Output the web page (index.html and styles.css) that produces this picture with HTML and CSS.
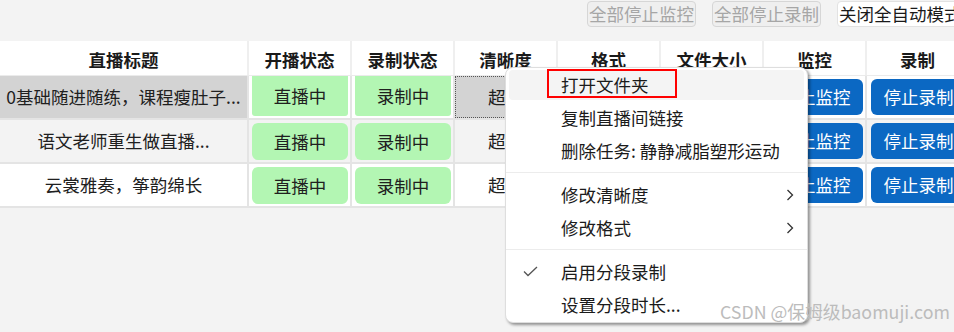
FILE: index.html
```html
<!DOCTYPE html>
<html lang="zh-CN">
<head>
  <meta charset="UTF-8">
  <title>直播录制任务</title>
  <link rel="stylesheet" href="styles.css">
</head>
<body>
  <div class="toolbar">
    <button class="tool-btn" disabled>全部停止监控</button>
    <button class="tool-btn" disabled>全部停止录制</button>
    <button class="tool-btn tool-btn-on">关闭全自动模式</button>
  </div>

  <div class="task-table">
    <div class="row row-head">
      <div class="cell">直播标题</div>
      <div class="cell">开播状态</div>
      <div class="cell">录制状态</div>
      <div class="cell">清晰度</div>
      <div class="cell">格式</div>
      <div class="cell">文件大小</div>
      <div class="cell">监控</div>
      <div class="cell">录制</div>
    </div>

    <div class="row row-current">
      <div class="cell cell-selected">0基础随进随练，课程瘦肚子...</div>
      <div class="cell"><span class="chip">直播中</span></div>
      <div class="cell"><span class="chip">录制中</span></div>
      <div class="cell cell-focus">超清</div>
      <div class="cell">FLV</div>
      <div class="cell">1.2 GB</div>
      <div class="cell"><button class="act-btn">停止监控</button></div>
      <div class="cell"><button class="act-btn">停止录制</button></div>
    </div>

    <div class="row row-alt">
      <div class="cell">语文老师重生做直播...</div>
      <div class="cell"><span class="chip">直播中</span></div>
      <div class="cell"><span class="chip">录制中</span></div>
      <div class="cell">超清</div>
      <div class="cell">FLV</div>
      <div class="cell">860 MB</div>
      <div class="cell"><button class="act-btn">停止监控</button></div>
      <div class="cell"><button class="act-btn">停止录制</button></div>
    </div>

    <div class="row">
      <div class="cell">云裳雅奏，筝韵绵长</div>
      <div class="cell"><span class="chip">直播中</span></div>
      <div class="cell"><span class="chip">录制中</span></div>
      <div class="cell">超清</div>
      <div class="cell">FLV</div>
      <div class="cell">415 MB</div>
      <div class="cell"><button class="act-btn">停止监控</button></div>
      <div class="cell"><button class="act-btn">停止录制</button></div>
    </div>
  </div>

  <!-- 右键菜单 -->
  <div class="context-menu">
    <div class="menu-item menu-item-hover">
      <span class="mi-icon"></span>打开文件夹
      <span class="mark-box"></span>
    </div>
    <div class="menu-item"><span class="mi-icon"></span>复制直播间链接</div>
    <div class="menu-item"><span class="mi-icon"></span>删除任务: 静静减脂塑形运动</div>
    <div class="menu-sep"></div>
    <div class="menu-item">
      <span class="mi-icon"></span>修改清晰度
      <svg class="mi-arrow" width="8" height="12" viewBox="0 0 8 12"><polyline points="1.5,1 6.5,6 1.5,11" fill="none" stroke="#333" stroke-width="1.3"/></svg>
    </div>
    <div class="menu-item">
      <span class="mi-icon"></span>修改格式
      <svg class="mi-arrow" width="8" height="12" viewBox="0 0 8 12"><polyline points="1.5,1 6.5,6 1.5,11" fill="none" stroke="#333" stroke-width="1.3"/></svg>
    </div>
    <div class="menu-sep"></div>
    <div class="menu-item">
      <span class="mi-icon"><svg width="15" height="11" viewBox="0 0 15 11"><polyline points="1,5.5 5,9.5 14,1" fill="none" stroke="#555" stroke-width="1.3"/></svg></span>启用分段录制
    </div>
    <div class="menu-item"><span class="mi-icon"></span>设置分段时长...</div>
  </div>

  <div class="watermark">CSDN @保姆级baomuji.com</div>
</body>
</html>
```

FILE: styles.css
```css
/* 基本样式 */
body {
  margin: 0;
  height: 332px;
  overflow: hidden;
  position: relative;
  background: #f3f3f3;
  font-family: "Noto Sans CJK SC", "Liberation Sans", sans-serif;
  font-size: 17.5px;
  color: #202020;
}

/* 顶部工具栏 */
.toolbar {
  height: 41px;
  box-sizing: border-box;
  padding: 1px 0 0 587px;
  display: flex;
  align-items: flex-start;
  gap: 16px;
  white-space: nowrap;
}

.tool-btn {
  height: 26px;
  padding: 0 1px;
  font: inherit;
  line-height: 24px;
  color: #a6a6a6;
  background: #efefef;
  border: 1px solid #d6d6d6;
  border-radius: 4px;
  flex-shrink: 0;
}

.tool-btn-on {
  color: #1a1a1a;
  background: #fff;
  border-color: #e2e2e2;
}

/* 任务表格 */
.task-table {
  width: 970px;
}

.row {
  display: grid;
  grid-template-columns: 249px repeat(7, 103px);
  height: 44px;
  box-sizing: border-box;
  border-bottom: 2px solid #e4e4e4;
  background: #fff;
}

.row-alt {
  background: #f3f3f3;
}

.row-head {
  height: 35px;
  border-bottom: 1px solid #ebebeb;
  font-weight: bold;
  color: #1a1a1a;
}

.cell {
  display: flex;
  align-items: center;
  justify-content: center;
  box-sizing: border-box;
  border-right: 2px solid #e4e4e4;
  white-space: nowrap;
  overflow: hidden;
  line-height: 1;
}

.row-head .cell {
  padding-top: 3px;
  border-right-color: #efefef;
}

.cell-selected {
  background: #d3d3d3;
}

.cell-focus {
  background: #d3d3d3;
  outline: 1px dotted #555;
  outline-offset: -1px;
}

/* 状态标签 */
.chip {
  align-self: stretch;
  flex: 1;
  margin: 3px 2px 2px 3px;
  display: flex;
  align-items: center;
  justify-content: center;
  background: #b3f6b3;
  border-radius: 6px;
}

.row-current .chip {
  margin-top: 0;
  border-radius: 0 0 3px 3px;
}

/* 操作按钮 */
.act-btn {
  align-self: stretch;
  flex: 1;
  margin: 3px 2px 3px 4px;
  padding: 0;
  font: inherit;
  color: #fff;
  background: #0b68c3;
  border: none;
  border-radius: 6px;
}

/* 右键菜单 */
.context-menu {
  position: absolute;
  left: 505px;
  top: 67px;
  width: 303px;
  box-sizing: border-box;
  display: flex;
  flex-direction: column;
  padding: 0 3px 1px;
  background: #fff;
  border: 1px solid #dedede;
  border-radius: 8px;
  box-shadow: 2px 2px 3px rgba(0, 0, 0, 0.4);
  color: #1b1b1b;
}

.menu-item {
  position: relative;
  height: 30px;
  margin: 1.5px 0;
  padding: 0 10px 0 14px;
  display: flex;
  align-items: center;
  white-space: nowrap;
  border-radius: 4px;
}

.menu-item-hover {
  background: #f4f4f4;
}

.mi-icon {
  width: 38px;
  flex-shrink: 0;
  display: flex;
  align-items: center;
}

.mi-arrow {
  margin-left: auto;
}

.menu-sep {
  height: 1px;
  margin: 5px -3px;
  background: #ececec;
}

/* 标注红框 */
.mark-box {
  position: absolute;
  left: 38px;
  top: -1px;
  width: 130px;
  height: 29px;
  box-sizing: border-box;
  border: 2px solid #f00;
}

/* 水印 */
.watermark {
  position: absolute;
  right: 4px;
  bottom: 8px;
  font-size: 17.8px;
  color: #bcbcbc;
  white-space: nowrap;
}
```
